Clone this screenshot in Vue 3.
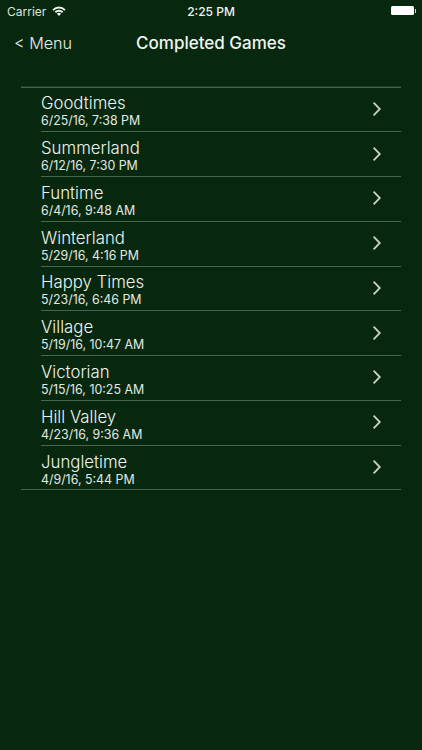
<script setup>
const games = [
  { name: 'Goodtimes', date: '6/25/16, 7:38 PM' },
  { name: 'Summerland', date: '6/12/16, 7:30 PM' },
  { name: 'Funtime', date: '6/4/16, 9:48 AM' },
  { name: 'Winterland', date: '5/29/16, 4:16 PM' },
  { name: 'Happy Times', date: '5/23/16, 6:46 PM' },
  { name: 'Village', date: '5/19/16, 10:47 AM' },
  { name: 'Victorian', date: '5/15/16, 10:25 AM' },
  { name: 'Hill Valley', date: '4/23/16, 9:36 AM' },
  { name: 'Jungletime', date: '4/9/16, 5:44 PM' },
]
</script>

<template>
  <div class="screen">
    <div class="status">
      <div class="status-left">
        <span>Carrier</span>
        <svg class="wifi" width="14" height="10" viewBox="0 0 14 10">
          <path d="M0.4 3.4 A9.2 9.2 0 0 1 13.6 3.4 L12.3 4.8 A7.3 7.3 0 0 0 1.7 4.8 Z" fill="#eef2ee" />
          <path d="M2.7 5.6 A6 6 0 0 1 11.3 5.6 L10 7 A4.2 4.2 0 0 0 4 7 Z" fill="#eef2ee" />
          <path d="M4.9 7.8 A3 3 0 0 1 9.1 7.8 L7 10 Z" fill="#eef2ee" />
        </svg>
      </div>
      <div class="status-time">2:25 PM</div>
      <div class="status-right">
        <div class="battery"></div>
        <div class="battery-tip"></div>
      </div>
    </div>
    <div class="nav">
      <div class="back">&lt; Menu</div>
      <div class="title">Completed Games</div>
    </div>
    <ul class="list">
      <li v-for="g in games" :key="g.name" class="row">
        <div class="text">
          <div class="name">{{ g.name }}</div>
          <div class="date">{{ g.date }}</div>
        </div>
        <svg class="chevron" width="10" height="16" viewBox="0 0 10 16">
          <path d="M1.6 1.6 L7.8 8 L1.6 14.4" fill="none" stroke="#c6d0c6" stroke-width="1.8" />
        </svg>
      </li>
    </ul>
  </div>
</template>

<style scoped>
.screen {
  width: 422px;
  height: 750px;
  overflow: hidden;
  background: #07280f;
  color: #f1f4f1;
  font-family: Inter, "Liberation Sans", sans-serif;
}
.status {
  height: 22px;
  display: flex;
  align-items: center;
  justify-content: space-between;
  padding: 0 6px 0 7px;
  position: relative;
  font-size: 12px;
}
.status-left {
  display: flex;
  align-items: center;
  gap: 6px;
  color: #dfe5df;
}
.status-time {
  position: absolute;
  left: 0;
  right: 0;
  text-align: center;
  font-weight: 500;
}
.status-right {
  display: flex;
  align-items: center;
  margin-top: -1px;
}
.battery {
  width: 23px;
  height: 9px;
  background: #fff;
  border-radius: 1.5px;
}
.battery-tip {
  width: 1.5px;
  height: 4px;
  margin-left: 1px;
  background: #cfd6cf;
}
.nav {
  height: 42px;
  display: flex;
  align-items: center;
  position: relative;
}
.back {
  margin-left: 14px;
  font-size: 16.2px;
  font-weight: 300;
  color: #e9eee9;
}
.title {
  position: absolute;
  left: 0;
  right: 0;
  text-align: center;
  font-size: 17px;
  font-weight: 500;
}
.list {
  list-style: none;
  margin: 22.5px 21px 0;
  padding: 0;
  border-top: 1px solid #4a644f;
  box-shadow: 0 -1px 0 #1f3d26;
}
.row {
  box-sizing: border-box;
  height: 44.78px;
  margin-left: 20px;
  border-bottom: 1px solid #4a644f;
  display: flex;
  align-items: center;
  justify-content: space-between;
  padding-right: 19px;
}
.row:last-child {
  margin-left: 0;
  padding-left: 20px;
}
.text {
  padding-top: 3px;
}
.name {
  font-size: 16.8px;
  font-weight: 300;
  line-height: 20px;
  color: #f0f4f0;
}
.date {
  font-size: 12.4px;
  line-height: 15px;
  font-weight: 400;
  color: #e2e8e2;
}
.chevron {
  margin-top: -1px;
}
</style>
